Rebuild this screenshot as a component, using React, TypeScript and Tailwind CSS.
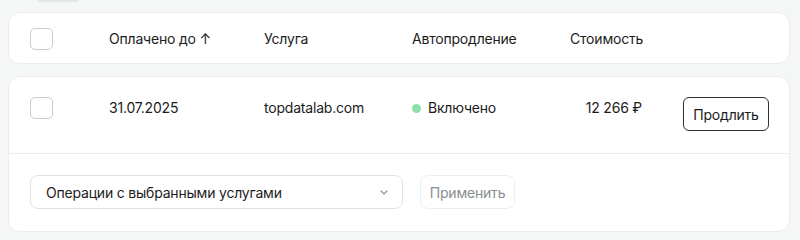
import React from "react";

const cols = "grid grid-cols-[79px_155px_148px_158px_72px_1fr]";

const Checkbox = () => (
  <div className="w-[23px] h-[22px] rounded-[5px] border border-[#c9ccce] bg-white" />
);

const App = () => {
  return (
    <div
      className="w-[800px] h-[240px] bg-[#f5f6f6] pl-2 pr-[10px] overflow-hidden text-[14px] tracking-[-0.2px] text-[#1c1c1c]"
      style={{ fontFamily: "Inter, 'Liberation Sans', sans-serif" }}
    >
      <div className="ml-[29px] w-[42px] h-[2px] bg-[#e4e8ec] rounded-b" />

      {/* header */}
      <div className="mt-[10px] bg-white border border-[#eceeee] rounded-xl pl-[21px] pr-[20px] pt-[15px] pb-[13px]">
        <div className={`${cols} items-center`}>
          <Checkbox />
          <div className="leading-[22px]">Оплачено до ↑</div>
          <div className="leading-[22px]">Услуга</div>
          <div className="leading-[22px]">Автопродление</div>
          <div className="leading-[22px]">Стоимость</div>
          <div />
        </div>
      </div>

      {/* rows */}
      <div className="mt-3 bg-white border border-[#eceeee] rounded-xl">
        <div className="pl-[21px] pr-[20px] pt-5 pb-[22px] border-b border-[#eceeee]">
          <div className={`${cols} items-start`}>
            <Checkbox />
            <div className="leading-[22px]">31.07.2025</div>
            <div className="leading-[22px]">topdatalab.com</div>
            <div className="leading-[22px] flex items-center gap-[7px]">
              <span className="w-[9px] h-[9px] rounded-full bg-[#8fe0a9]" />
              Включено
            </div>
            <div className="leading-[22px] text-right">12 266 ₽</div>
            <div className="flex justify-end">
              <button className="w-[86px] h-[34px] border border-[#2e2e2e] rounded-md bg-white text-[14px] text-[#1c1c1c]">
                Продлить
              </button>
            </div>
          </div>
        </div>
        <div className="pl-[21px] pt-[21px] pb-[22px] flex gap-[17px]">
          <div className="w-[373px] h-[34px] border border-[#dfe2e3] rounded-lg flex items-center justify-between pl-[15px] pr-[14px]">
            <span>Операции с выбранными услугами</span>
            <svg width="8" height="5" viewBox="0 0 8 5" fill="none">
              <path d="M1 1l3 3 3-3" stroke="#8d9194" strokeWidth="1.1" strokeLinecap="round" strokeLinejoin="round" />
            </svg>
          </div>
          <button className="w-[95px] h-[34px] border border-[#eceeef] rounded-lg bg-white text-[14px] text-[#8a8d90]">
            Применить
          </button>
        </div>
      </div>
    </div>
  );
};

export default App;
